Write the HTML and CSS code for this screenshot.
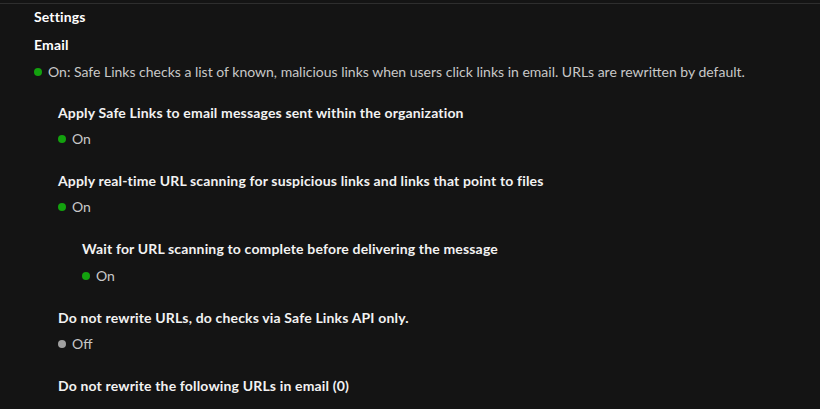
FILE: index.html
```html
<!DOCTYPE html>
<html>
<head>
<meta charset="utf-8">
<link rel="stylesheet" href="styles.css">
</head>
<body>
<div class="panel">
  <h2 class="heading">Settings</h2>
  <h3 class="heading">Email</h3>
  <div class="status"><span class="dot on"></span>On: Safe Links checks a list of known, malicious links when users click links in email. URLs are rewritten by default.</div>
  <div class="group">
    <div class="item">
      <div class="title">Apply Safe Links to email messages sent within the organization</div>
      <div class="status"><span class="dot on"></span>On</div>
    </div>
    <div class="item">
      <div class="title">Apply real-time URL scanning for suspicious links and links that point to files</div>
      <div class="status"><span class="dot on"></span>On</div>
    </div>
    <div class="item nested">
      <div class="title">Wait for URL scanning to complete before delivering the message</div>
      <div class="status"><span class="dot on"></span>On</div>
    </div>
    <div class="item">
      <div class="title">Do not rewrite URLs, do checks via Safe Links API only.</div>
      <div class="status"><span class="dot off"></span>Off</div>
    </div>
    <div class="item">
      <div class="title">Do not rewrite the following URLs in email (0)</div>
    </div>
  </div>
</div>
</body>
</html>
```
FILE: styles.css
```css
html, body {
  margin: 0;
  padding: 0;
  background: #141414;
  height: 100%;
  overflow: hidden;
}
body {
  font-family: "Segoe UI", Lato, "Liberation Sans", Arial, sans-serif;
  font-size: 14px;
  color: #d6d6d6;
}
.panel {
  margin-top: 3px;
  border-top: 1px solid #2e2e2e;
  padding: 3px 34px 0 34px;
}
.heading {
  margin: 0;
  font-size: 14px;
  font-weight: 700;
  line-height: 20px;
  letter-spacing: 0.15px;
  color: #ffffff;
}
h3.heading {
  margin-top: 8px;
}
.status {
  display: flex;
  align-items: center;
  line-height: 20px;
  color: #c8c8c8;
  margin-top: 7px;
}
.dot {
  width: 8px;
  height: 8px;
  border-radius: 50%;
  margin-right: 6px;
  flex: none;
}
.dot.on { background: #13a10e; }
.dot.off { background: #a0a0a0; }
.group {
  padding-left: 24px;
  padding-top: 21px;
}
.item {
  margin-bottom: 22px;
}
.item .status {
  margin-top: 6px;
}
.item.nested {
  padding-left: 24px;
}
.item.nested .status {
  margin-top: 7px;
}
.title {
  font-weight: 700;
  line-height: 20px;
  letter-spacing: 0.16px;
  color: #f2f2f2;
}
```
